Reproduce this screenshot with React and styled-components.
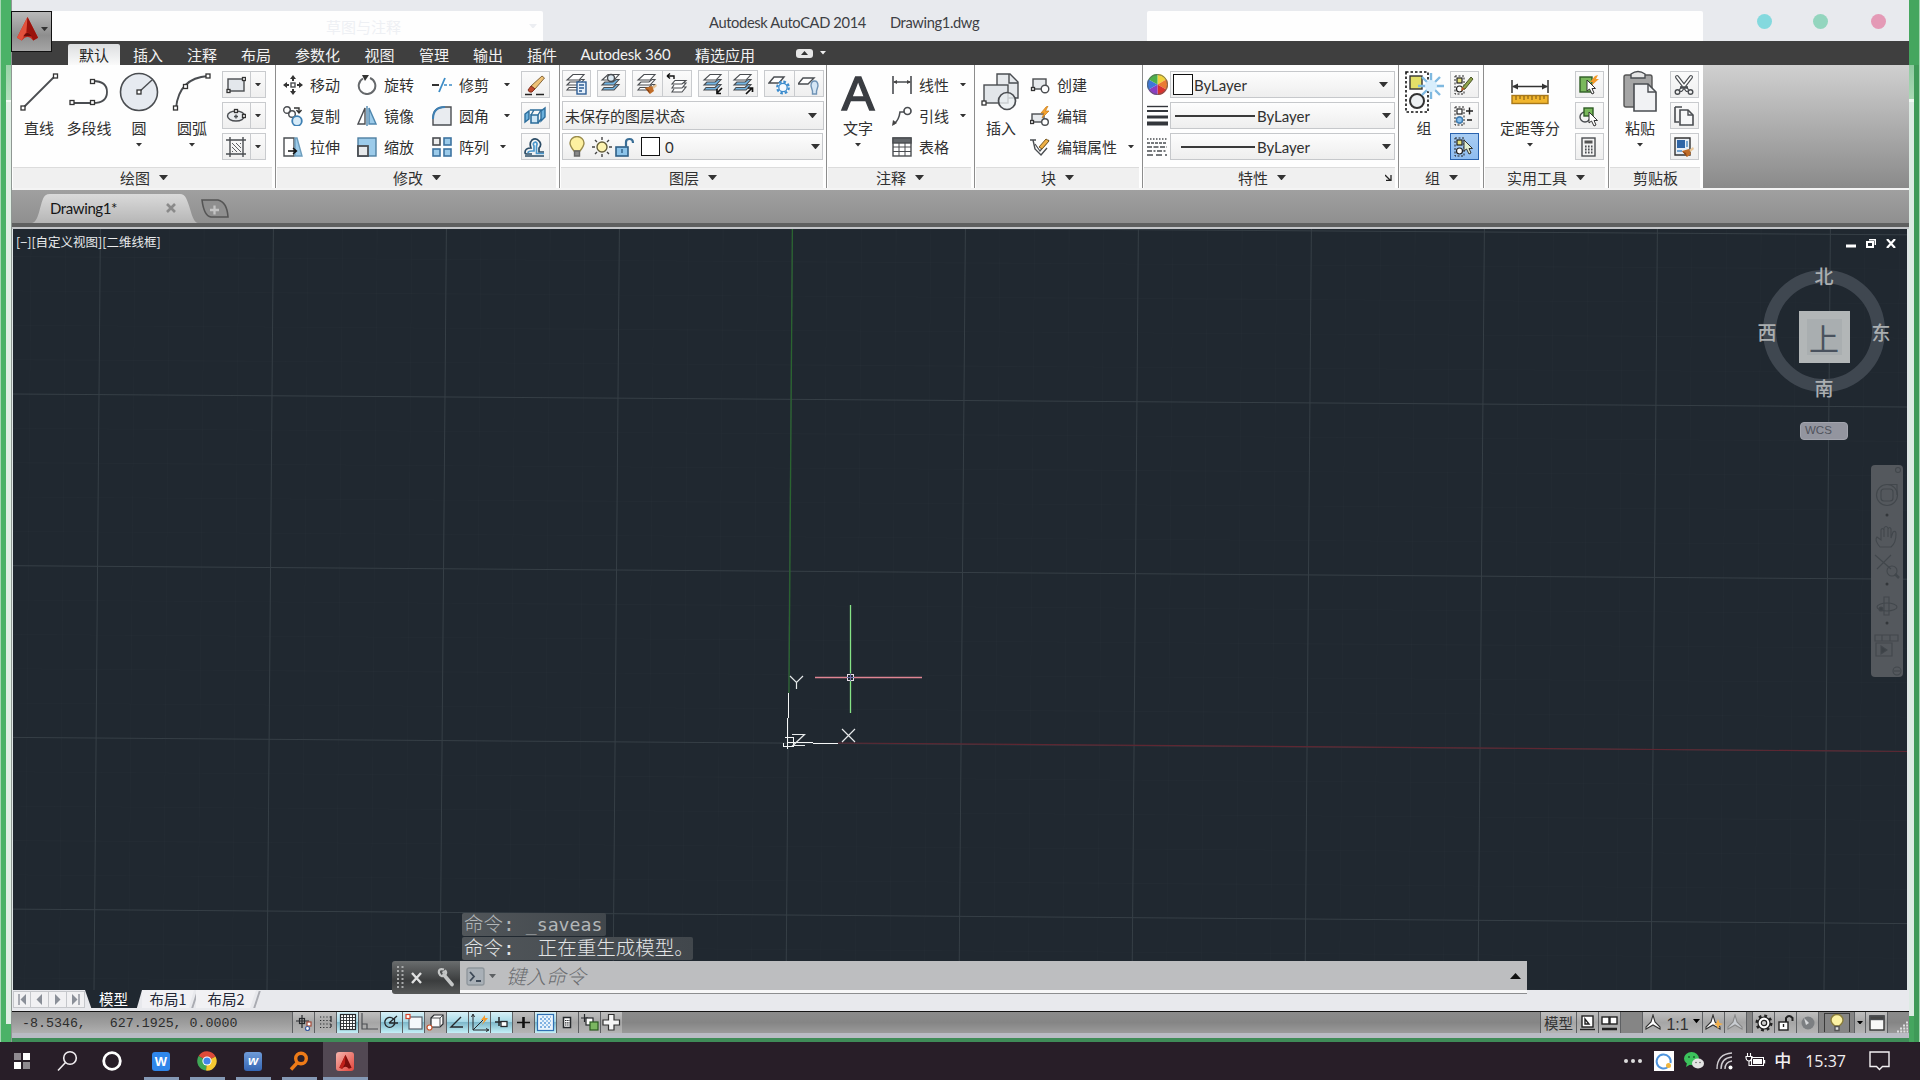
import React from "react";
import styled, { createGlobalStyle, css } from "styled-components";

const UI = `Lato, "Noto Sans CJK SC", sans-serif`;
const MONO = `"Liberation Mono", "Noto Sans CJK SC", monospace`;

const Global = createGlobalStyle`
  html, body { margin: 0; padding: 0; }
  body { width: 1920px; height: 1080px; overflow: hidden; background: #281e28; font-family: ${UI}; }
  *, *::before { box-sizing: border-box; }
  svg { display: block; flex: none; }
`;

/* ---------- frame ---------- */
const Screen = styled.div`
  width: 1920px;
  height: 1080px;
  display: flex;
  flex-direction: column;
  overflow: hidden;
`;
const Frame = styled.div`
  position: relative;
  height: 1042px;
  display: grid;
  grid-template-columns: 12px 1fr 11px;
  background: #e8eaee;
`;
const LeftEdge = styled.div`
  background:
    linear-gradient(#e0efe4, #e0efe4) 6px 102px / 5px 922px no-repeat,
    linear-gradient(#f4faf5, #f4faf5) 6px 100px / 5px 2px no-repeat,
    linear-gradient(#9ad3a8, #b4e0be) 6px 65px / 5px 35px no-repeat,
    linear-gradient(#a6d6b3, #a6d6b3) 0 0 / 1px 100% no-repeat,
    #4bb267;
  border-right: 1px solid #8f9793;
`;
const RightEdge = styled.div`
  background:
    linear-gradient(#3f9a58, #3f9a58) 5px 65px / 5px 977px no-repeat,
    linear-gradient(#dcebe3, #dcebe3) 0 102px / 5px 914px no-repeat,
    linear-gradient(#f0f8f2, #f0f8f2) 0 99px / 5px 3px no-repeat,
    linear-gradient(#8fcaa0, #a9d9b4) 0 65px / 5px 34px no-repeat,
    linear-gradient(#a6d6b3, #a6d6b3) 10px 0 / 1px 100% no-repeat,
    #45a65f;
`;
const Center = styled.div`
  display: flex;
  flex-direction: column;
  min-width: 0;
`;

/* ---------- title ---------- */
const TitleBar = styled.div`
  height: 41px;
  display: flex;
  align-items: flex-end;
  background: #e8eaee;
`;
const WhiteStrip = styled.div`
  width: ${(p) => p.$w}px;
  height: 30px;
  margin-left: ${(p) => p.$ml || 0}px;
  background: #fefefe;
  display: flex;
  align-items: center;
  padding-left: ${(p) => p.$pl || 0}px;
  padding-right: 6px;
  justify-content: space-between;
  color: #eef0f4;
  font-size: 15px;
  border-radius: 2px 2px 0 0;
`;
const Caption = styled.div`
  width: 604px;
  height: 41px;
  display: flex;
  align-items: center;
  padding: 2px 0 0 166px;
  gap: 24px;
  color: #3d4044;
  font-size: 14.7px;
  letter-spacing: -0.37px;
  white-space: nowrap;
`;
const Dots = styled.div`
  display: flex;
  height: 41px;
  align-items: center;
  padding: 2px 0 0 54px;
`;
const Dot = styled.i`
  width: 15px;
  height: 15px;
  border-radius: 50%;
  background: ${(p) => p.$c};
  margin-right: ${(p) => p.$mr}px;
`;
const AppButton = styled.div`
  position: absolute;
  left: 11px;
  top: 11px;
  width: 41px;
  height: 41px;
  border: 1px solid #111;
  background: linear-gradient(#b9b9b9, #8e8e8e 60%, #a5a5a5);
  display: flex;
  align-items: center;
  padding: 0 0 5px 4px;
  gap: 2px;
`;

/* ---------- ribbon ---------- */
const TabStrip = styled.div`
  height: 24px;
  background: #3f3f3f;
  display: flex;
  align-items: flex-end;
  padding-left: 56px;
`;
const Tab = styled.div`
  width: ${(p) => p.$w}px;
  height: 21px;
  display: flex;
  align-items: center;
  justify-content: center;
  padding-bottom: 1px;
  color: #f2f2f2;
  font-size: 15px;
  letter-spacing: ${(p) => p.$ls || 0}px;
  white-space: nowrap;
  margin-right: ${(p) => (p.$on ? 1 : 0)}px;
  ${(p) =>
    p.$on &&
    css`
      background: linear-gradient(#dcdee0, #fafafa);
      color: #222;
      border-radius: 2px 2px 0 0;
    `}
`;
const TabToggle = styled.div`
  height: 24px;
  display: flex;
  align-items: center;
  gap: 7px;
  margin-left: 28px;
`;
const Pill = styled.div`
  width: 17px;
  height: 9px;
  border-radius: 3px;
  background: #e6e6e6;
  display: flex;
  align-items: center;
  justify-content: center;
`;
const Ribbon = styled.div`
  height: 125px;
  display: flex;
  border-bottom: 2px solid #f4f4f4;
  background: linear-gradient(#d0d0d0, #8a8a8a);
`;
const PanelBox = styled.div`
  width: ${(p) => p.$w}px;
  height: 123px;
  display: flex;
  flex-direction: column;
  background: #fefefe;
  border-right: ${(p) => (p.$last ? 0 : 1)}px solid #8d8d8d;
  flex: none;
`;
const PanelBody = styled.div`
  height: 102px;
  display: flex;
  align-items: flex-start;
`;
const PanelTitle = styled.div`
  height: 21px;
  margin: 0 3px 0 1px;
  background: #f0f0f0;
  border-top: 1px solid #dcdcdc;
  display: flex;
  align-items: center;
  padding: 0 0 1px ${(p) => p.$pl}px;
  gap: 9px;
  font-size: 15px;
  color: #303030;
  white-space: nowrap;
`;
const PanelCorner = styled.div`
  margin: 0 3px 0 auto;
`;
const Big = styled.div`
  width: ${(p) => p.$w}px;
  margin-left: ${(p) => p.$ml || 0}px;
  display: flex;
  flex-direction: column;
  align-items: center;
  flex: none;
`;
const BigIcon = styled.div`
  height: 53px;
  display: flex;
  align-items: center;
  justify-content: center;
`;
const BigLabel = styled.div`
  height: 21px;
  line-height: 21px;
  font-size: 15px;
  color: #303030;
  white-space: nowrap;
  margin-bottom: 4px;
`;
const BigLetter = styled.span`
  font: 49px/1 "Liberation Sans", sans-serif;
  color: #3a3d42;
  -webkit-text-stroke: 1.4px #3a3d42;
  padding-top: 3px;
`;
const Stack = styled.div`
  display: flex;
  flex-direction: column;
  gap: 4px;
  padding-top: 6px;
  margin-left: ${(p) => p.$ml || 0}px;
`;
const Sq = styled.div`
  width: ${(p) => p.$w || 29}px;
  height: 27px;
  display: flex;
  align-items: center;
  justify-content: center;
  border: 1px solid ${(p) => (p.$on ? "#2a63ae" : "#c9cbce")};
  background: ${(p) => (p.$on ? "linear-gradient(#a9cdf3,#8fbdf0)" : "linear-gradient(#fbfbfb,#efefef)")};
  padding-right: ${(p) => (p.$w === 16 ? 0 : 1)}px;
  flex: none;
`;
const Split = styled.div`
  display: flex;
  & > * + * { margin-left: -1px; }
`;
const Rows = styled.div`
  width: ${(p) => p.$w}px;
  margin-left: ${(p) => p.$ml || 0}px;
  padding-top: 4px;
  flex: none;
`;
const Row = styled.div`
  height: 31px;
  display: flex;
  align-items: center;
  gap: 7px;
  font-size: 15px;
  color: #303030;
  white-space: nowrap;
`;
const Push = styled.div`
  margin-left: auto;
  padding-right: ${(p) => p.$pr || 0}px;
`;
const LayerCol = styled.div`
  padding: 5px 0 0 2px;
  display: flex;
  flex-direction: column;
`;
const LayerTools = styled.div`
  display: flex;
  gap: 6px;
  margin-bottom: 4px;
`;
const Combo = styled.div`
  width: ${(p) => p.$w}px;
  height: ${(p) => p.$h || 27}px;
  margin-bottom: ${(p) => p.$mb || 0}px;
  border: 1px solid #c6c8cb;
  background: linear-gradient(#fdfdfd, #eeeeee);
  display: flex;
  align-items: center;
  padding: 0 ${(p) => p.$pr || 4}px 0 ${(p) => p.$pl || 3}px;
  font-size: 15px;
  color: #303030;
  white-space: nowrap;
`;
const Swatch = styled.i`
  width: ${(p) => p.$s}px;
  height: ${(p) => p.$h || p.$s}px;
  border: 1.5px solid #111;
  background: #fff;
  margin: 0 ${(p) => p.$mr}px 0 ${(p) => p.$ml || 0}px;
`;
const LineSample = styled.i`
  width: ${(p) => p.$w}px;
  height: 2px;
  background: #3a3a3a;
  margin: 0 2px 0 ${(p) => p.$ml}px;
`;
const PropIcons = styled.div`
  width: 27px;
  padding: 0 0 0 4px;
  display: flex;
  align-items: center;
`;
const PropRow = styled.div`
  display: flex;
`;

/* ---------- document tabs ---------- */
const DocBar = styled.div`
  height: 33px;
  background: linear-gradient(#a0a0a0, #8f8f8f);
  display: flex;
  align-items: flex-end;
  padding-left: 20px;
`;
const DocTab = styled.div`
  width: 166px;
  height: 29px;
  clip-path: path("M0 29 C8 28 8 4 14 1 Q15 0 18 0 L148 0 Q152 0 154 4 C159 14 160 28 166 29 Z");
  background: linear-gradient(#dadada, #b6b6b6);
  display: flex;
  align-items: center;
  justify-content: space-between;
  padding: 0 22px 2px 18px;
  font-size: 15px;
  letter-spacing: -0.4px;
  color: #161616;
`;
const NewTab = styled.div`
  margin: 0 0 5px 3px;
`;
const Bevel = styled.div`
  height: 6px;
  background: #5f6060;
  border-bottom: 2px solid #c3c5c8;
`;

/* ---------- drawing area ---------- */
const Canvas = styled.div`
  position: relative;
  height: 761px;
  margin: 0 2px 0 1px;
  background: #202830;
  overflow: hidden;
`;
const CanvasWrap = styled.div`
  background: #dfe6e6;
`;
const Drawing = styled.svg`
  position: absolute;
  inset: 0;
`;
const ViewLabel = styled.div`
  position: absolute;
  left: 3px;
  top: 3px;
  font: 12.5px/19px "Noto Sans CJK SC", sans-serif;
  color: #e9ebec;
  white-space: nowrap;
`;
const WinCtl = styled.div`
  position: absolute;
  right: 11px;
  top: 10px;
  display: flex;
  gap: 10px;
`;
const Compass = styled.div`
  position: absolute;
  left: 1743px;
  top: 35px;
  width: 136px;
  height: 136px;
  display: grid;
  grid-template-columns: 22px 1fr 22px;
  grid-template-rows: 24px 1fr 24px;
  place-items: center;
  font: 500 19px/22px "Noto Sans CJK SC", sans-serif;
  color: #abafb1;
  &::before {
    content: "";
    position: absolute;
    left: 7px;
    top: 6px;
    width: 122px;
    height: 122px;
    border-radius: 50%;
    border: 13px solid #3f4750;
  }
  & > * { position: relative; }
`;
const Pt = styled.span`
  grid-area: ${(p) => p.$a};
`;
const Cube = styled.div`
  grid-area: 2 / 2;
  width: 51px;
  height: 52px;
  background: #a9aeb0;
  border: 8px solid #b2b6b7;
  display: flex;
  align-items: center;
  justify-content: center;
  color: #4a525e;
  font-size: 30px;
  font-weight: 400;
  margin-top: 10px;
`;
const Wcs = styled.div`
  position: absolute;
  left: 1787px;
  top: 193px;
  width: 48px;
  height: 18px;
  border-radius: 4px;
  background: #93959f;
  border: 1px solid #a2a4ad;
  color: #50535c;
  font: 11.5px/15px "Liberation Sans", sans-serif;
  padding-left: 4px;
`;
const NavBar = styled.div`
  position: absolute;
  left: 1858px;
  top: 236px;
  width: 32px;
  height: 212px;
  border-radius: 4px;
  background: #54585d;
`;

/* ---------- command line ---------- */
const CmdArea = styled.div`
  position: absolute;
  left: 392px;
  top: 913px;
  width: 1135px;
  display: flex;
  flex-direction: column;
`;
const History = styled.div`
  width: ${(p) => p.$w}px;
  height: 23px;
  margin: 0 0 1px 70px;
  background: linear-gradient(90deg, #51565a, #41474c);
  border-radius: 2px;
  color: ${(p) => p.$c};
  font: 300 19.5px/23px "DejaVu Sans Mono", "Noto Sans CJK SC", monospace;
  padding-left: 2px;
  display: flex;
  gap: ${(p) => p.$gap}px;
  white-space: pre;
`;
const HistoryText = styled.span`
  height: 23px;
`;
const SaveText = styled.span`
  font-size: 18.2px;
`;
const CmdBar = styled.div`
  height: 33px;
  display: flex;
`;
const CmdHandle = styled.div`
  width: 68px;
  background: linear-gradient(#6a6d6e, #3b3d3e 60%, #565858);
  border-radius: 3px 0 0 3px;
  display: flex;
  align-items: center;
  padding-left: 5px;
`;
const CmdInput = styled.div`
  flex: 1;
  background: #bdbec0;
  border-bottom: 1px solid #8d8e90;
  box-shadow: inset 0 -3px 0 #f7f7f8;
  display: flex;
  align-items: center;
  padding: 0 6px 2px 6px;
  font: italic 300 20px/28px "Noto Sans CJK SC", sans-serif;
  color: #6b6d70;
`;
const CmdText = styled.span`
  margin: 0 auto 0 10px;
`;

/* ---------- layout tabs and status ---------- */
const LayoutBar = styled.div`
  height: 21px;
  background: #e8e9ed;
  display: flex;
  padding: 1px 0 0 1px;
`;
const NavBtn = styled.div`
  width: 18px;
  height: 17px;
  border: 1px solid #c5c7cb;
  border-left-width: ${(p) => (p.$first ? 1 : 0)}px;
  background: #f1f1f3;
  display: flex;
  align-items: center;
  justify-content: center;
`;
const LayoutTab = styled.div`
  width: ${(p) => p.$w}px;
  height: 18px;
  margin: -1px 0 0 ${(p) => p.$ml || 0}px;
  font: 14.5px/18px "Noto Sans CJK SC", sans-serif;
  display: flex;
  justify-content: center;
  white-space: nowrap;
  color: ${(p) => (p.$on ? "#fff" : "#222736")};
  background: ${(p) => (p.$on ? "#202830" : "#f1f1f4")};
  clip-path: ${(p) =>
    p.$on ? "polygon(0 0, 100% 0, 91% 100%, 11% 100%)" : "polygon(0 0, 100% 0, 90% 100%, 0 100%)"};
`;
const Slash = styled.i`
  width: 2px;
  height: 17px;
  background: #a9abb2;
  transform: skewX(-18deg);
`;
const StatusWrap = styled.div`
  height: 31px;
  border-top: 1px solid #141414;
  display: flex;
  flex-direction: column;
  background: linear-gradient(#b9bbc4, #b9bbc4) 0 21px / 100% 5px no-repeat, #3f8c58;
`;
const Status = styled.div`
  height: 21px;
  display: flex;
  background: linear-gradient(#8b8b8b, #858585 50%, #9a9a9a);
`;
const Coords = styled.div`
  width: 280px;
  padding-left: 10px;
  background: linear-gradient(#8e8e8e, #9c9c9c 50%, #b0b0b0);
  font: 13.3px/23px ${MONO};
  color: #2c2c2c;
  white-space: pre;
`;
const SBtn = styled.div`
  width: ${(p) => p.$w || 22}px;
  height: 21px;
  display: flex;
  align-items: center;
  justify-content: center;
  gap: 3px;
  border-left: 1px solid #5e6063;
  background: ${(p) =>
    p.$on
      ? "linear-gradient(#d8f0f6,#a9dbe8 45%,#7fb9cb 50%,#c4f0f6)"
      : p.$dark
      ? "#858585"
      : "linear-gradient(#bfbfbf,#a6a6a6 50%,#b4b4b4)"};
  color: #333;
  font: 14.5px/24px "Noto Sans CJK SC", sans-serif;
  white-space: nowrap;
  flex: none;
`;
const Pressed = styled.div`
  width: 26px;
  height: 19px;
  border: 1px solid #3b3b3b;
  border-bottom: 0;
  display: flex;
  align-items: center;
  justify-content: center;
`;
const Scale = styled.span`
  font: 16px/20px "Liberation Sans", sans-serif;
  padding-top: 4px;
`;
const RaisedCaret = styled.span`
  padding-bottom: 2px;
  margin-left: 1px;
`;
const Spacer = styled.div`
  flex: 1;
`;
const Grip = styled.div`
  width: 22px;
  display: flex;
  align-items: flex-end;
  justify-content: flex-end;
  border-left: 1px solid #5e6063;
`;

/* ---------- taskbar ---------- */
const Taskbar = styled.div`
  height: 38px;
  background: #281e28;
  display: flex;
`;
const TaskItem = styled.div`
  width: ${(p) => p.$w}px;
  height: 38px;
  margin-right: ${(p) => p.$mr || 0}px;
  display: flex;
  align-items: center;
  justify-content: center;
  background: ${(p) => (p.$active ? "#524853" : "transparent")};
  border-bottom: ${(p) => (p.$open ? "3px solid #8599b5" : "0")};
  padding: ${(p) => (p.$open ? 3 : 0)}px 1px 0 0;
`;
const AppTile = styled.div`
  width: 18px;
  height: 19px;
  border-radius: 3px;
  background: ${(p) => p.$bg};
  color: #fff;
  font: ${(p) => p.$f || "bold 13px/19px"} "Liberation Sans", sans-serif;
  text-align: center;
`;
const Tray = styled.div`
  margin-left: auto;
  display: flex;
  align-items: center;
  color: #f1eef1;
  padding-right: 30px;
`;
const TrayText = styled.span`
  font: ${(p) => p.$f} "Open Sans", "Noto Sans CJK SC", sans-serif;
  margin-right: ${(p) => p.$mr}px;
`;
const Gap = styled.i`
  width: ${(p) => p.$w}px;
`;

/* ---------- icon helpers ---------- */
const G = ({ w = 20, h = 20, vb, children, ...r }) => (
  <svg width={w} height={h} viewBox={vb || `0 0 ${w} ${h}`} fill="none" stroke="#4a4d51" strokeWidth="1.4" {...r}>
    {children}
  </svg>
);
const Caret = ({ s = 7, c = "#333" }) => (
  <svg width={s} height={s * 0.6} viewBox="0 0 10 6"><path d="M0 0H10L5 6Z" fill={c} /></svg>
);
const Node = ({ x, y, s = 4 }) => (
  <rect x={x - s / 2} y={y - s / 2} width={s} height={s} fill="#fff" stroke="#333" strokeWidth="1.3" />
);
const blue = "#9ccbea";

const Layers = ({ fill = "#fff", children }) => (
  <G w={22} h={22}>
    <path d="M4 14.500L2 17H14L19 11.500H16L13 14.500Z" strokeWidth="1.100" fill={fill} />
    <path d="M5 9L2 12H14L19 6.500H16L13 9Z" strokeWidth="1.100" fill={fill} />
    <path d="M8 1.500H19L14 7H2Z" fill="#fff" strokeWidth="1.100" />
    {children}
  </G>
);

const Logo = ({ s = 24 }) => (
  <svg width={s} height={s * 1.1} viewBox="0 0 24 28" preserveAspectRatio="none">
    <path d="M12 1L1 24L6 27Q12 19 18 27L23 24Z" fill="#c7281c" />
    <path d="M12 1L1 24L6 27L11 17Z" fill="#e2513c" />
    <path d="M12 1L11 18Q15 18 18 27L23 24Z" fill="#9a130c" />
    <path d="M6 27Q8 19 12 18.500Q16 19 18 27L16.500 22.500H7.500Z" fill="#6f0c08" />
  </svg>
);

const Erase = () => (
  <G w={22} h={22}>
    <path d="M1 20.500H8M12 20.500H20" stroke="#222" />
    <path d="M18 2L20.500 4L11 15L7 12Z" fill="#efc277" stroke="#85663a" strokeWidth="1" />
    <path d="M7 12L11 15L8 18Q5 19 4 16Z" fill="#c24a2c" stroke="#843320" strokeWidth="1" />
  </G>
);

const GroupMini = ({ children, c = "#e6e27a" }) => (
  <G w={22} h={22}>
    <rect x="2" y="2" width="9" height="18" strokeDasharray="2 1.500" strokeWidth="1" stroke="#222" />
    <rect x="4" y="4" width="5" height="5" fill={c} stroke="#222" strokeWidth="1.2" />
    <circle cx="6.500" cy="15" r="3" fill="#fff" stroke="#222" strokeWidth="1.2" />
    {children}
  </G>
);
const Cursor = ({ x = 0, y = 0, f = "#fff" }) => (
  <path transform={`translate(${x} ${y})`} d="M0 0V11L2.500 9L5 14L7 13L5 8.500H8.500Z" fill={f} stroke="#333" strokeWidth="1" />
);
const Brush = ({ x = 0, y = 0 }) => (
  <g transform={`translate(${x} ${y})`} stroke="none">
    <path d="M7 3L11 0L12 2L8.500 5Z" fill="#e9c79a" />
    <path d="M0 4L7 2L9 7L5 10Z" fill="#c06c27" />
    <path d="M0 4L4 6L5 10Z" fill="#8c4414" />
  </g>
);

/* ---------- ribbon panels ---------- */
const Panel = ({ w, title, pl, last, noCaret, corner, children }) => (
  <PanelBox $w={w} $last={last}>
    <PanelBody>{children}</PanelBody>
    <PanelTitle $pl={pl}>
      {title}
      {!noCaret && <Caret s={9} />}
      {corner && (
        <PanelCorner>
          <G w={7} h={7}><path d="M0 1L5 6M6 1V6.500H1" strokeWidth="1.300" stroke="#222" /></G>
        </PanelCorner>
      )}
    </PanelTitle>
  </PanelBox>
);
const BigTool = ({ w, ml, icon, label, caret }) => (
  <Big $w={w} $ml={ml}>
    <BigIcon>{icon}</BigIcon>
    <BigLabel>{label}</BigLabel>
    {caret && <Caret s={6} />}
  </Big>
);

const DrawPanel = () => (
  <Panel w={264} title="绘图" pl={107}>
    <BigTool w={54} label="直线" icon={<G w={40} h={40}><path d="M4 36L36 4" strokeWidth="1.8" /><Node x={4} y={36} /><Node x={36.5} y={4} /></G>} />
    <BigTool w={46} label="多段线" icon={<G w={40} h={40}><path d="M3 31H23.500M24 9Q38 9 38 20Q38 31 24 31" strokeWidth="1.8" /><Node x={3} y={30.5} /><Node x={23.5} y={30.5} /><Node x={23.5} y={9.5} /></G>} />
    <BigTool w={54} label="圆" caret icon={<G w={40} h={40}><circle cx="20" cy="20" r="18.500" fill="#e6eaf0" strokeWidth="1.6" /><path d="M20 20L33 8" /><Node x={20} y={20} /></G>} />
    <BigTool w={52} label="圆弧" caret icon={<G w={40} h={40}><path d="M4 36Q7 6 36 4" strokeWidth="1.8" /><Node x={3.5} y={36} /><Node x={13.5} y={14.5} /><Node x={36} y={4} /></G>} />
    <Stack $ml={4}>
      <Split>
        <Sq><G><rect x="2" y="4" width="16" height="12" fill="#e3e7ec" /><Node x={2.5} y={16} s={3} /><Node x={18} y={4} s={3} /></G></Sq>
        <Sq $w={16}><Caret s={6} /></Sq>
      </Split>
      <Split>
        <Sq><G><ellipse cx="10" cy="10" rx="8.500" ry="5" fill="#e9ecef" /><Node x={10} y={5} s={3} /><Node x={18} y={10} s={3} /><path d="M8 10.500H12M10 8.500V12.500" /></G></Sq>
        <Sq $w={16}><Caret s={6} /></Sq>
      </Split>
      <Split>
        <Sq><G><path d="M4 0V20M17 0V20M0 3H20M0 17H20" /><path d="M6 6L15 15M6 10L11 15M10 6L15 11M14 6L15 7M6 14L7 15" strokeWidth="0.900" /></G></Sq>
        <Sq $w={16}><Caret s={6} /></Sq>
      </Split>
    </Stack>
  </Panel>
);

const ModifyPanel = () => (
  <Panel w={284} title="修改" pl={116}>
    <Rows $ml={7} $w={74}>
      <Row><G><path d="M10 0L7 4H13ZM10 20L7 16H13ZM0 10L4 7V13ZM20 10L16 7V13Z" fill="#333" stroke="none" /><path d="M10 3V6M10 14V17M3 10H6M14 10H17" stroke="#333" strokeWidth="2" /><rect x="8" y="8" width="4" height="4" /></G>移动</Row>
      <Row><G><circle cx="4" cy="4" r="3.300" /><circle cx="9" cy="8" r="3.300" /><path d="M11 2H16V6M13.500 4L16 7L18.500 4" stroke="#333" /><circle cx="14" cy="15" r="4.800" fill="#d7ebf8" stroke="#3e80b4" strokeWidth="1.800" /></G>复制</Row>
      <Row><G><path d="M1 1H11V19H1Z" fill="#fff" /><path d="M12 1H14L19 19H12Z" fill={blue} stroke="#6d9dbc" /><path d="M5 14H13M10 11L13.500 14L10 17" stroke="#111" /></G>拉伸</Row>
    </Rows>
    <Rows $w={75}>
      <Row><G><path d="M6 3.500A8.300 8.300 0 1 0 13 3" strokeWidth="2" stroke="#65686b" /><path d="M5 0H12L8 6Z" fill="#333" stroke="none" /></G>旋转</Row>
      <Row><G><path d="M8 2V18H1Z" fill="#fff" /><path d="M12 2V18H19Z" fill={blue} stroke="#4f87ae" /><path d="M10 0V20" stroke="#4f87ae" /></G>镜像</Row>
      <Row><G><rect x="1" y="1" width="18" height="18" fill={blue} stroke="#4f7fa2" /><rect x="1" y="9" width="10" height="10" fill="#e7e9eb" strokeWidth="1.800" /></G>缩放</Row>
    </Rows>
    <Rows $w={81}>
      <Row><G><path d="M0 10H7" strokeWidth="2" stroke="#333" /><path d="M7 17L13 3" stroke="#3c8cc6" strokeWidth="1.800" /><path d="M12 10H20" stroke="#3c8cc6" strokeDasharray="3 2" /></G>修剪<Push $pr={3}><Caret s={6} /></Push></Row>
      <Row><G><path d="M1 19V12Q1 1 13 1H19V19Z" fill="#e9ecf0" /><path d="M1 13Q1 1 13 1" stroke="#3e80b4" strokeWidth="2" /></G>圆角<Push $pr={3}><Caret s={6} /></Push></Row>
      <Row><G><rect x="1" y="1" width="7" height="7" fill="#eee" strokeWidth="1.600" /><rect x="12" y="1" width="7" height="7" fill={blue} stroke="#3e73a0" strokeWidth="1.600" /><rect x="1" y="12" width="7" height="7" fill={blue} stroke="#3e73a0" strokeWidth="1.600" /><rect x="12" y="12" width="7" height="7" fill={blue} stroke="#3e73a0" strokeWidth="1.600" /></G>阵列<Push $pr={7}><Caret s={6} /></Push></Row>
    </Rows>
    <Stack $ml={8}>
      <Sq><Erase /></Sq>
      <Sq><G w={22} h={22}><path d="M1 9L5 6V14L1 17Z" fill="#6bb0dc" stroke="#2c6d9b" /><path d="M17 6L21 3V12L17 16Z" fill="#6bb0dc" stroke="#2c6d9b" /><path d="M7 10H14V18H7Z" fill="#cfe7f6" stroke="#2c6d9b" strokeWidth="1.600" /><path d="M7 10L10 5H17L14 10M6 5H11M14 18L17 14" stroke="#2c6d9b" /></G></Sq>
      <Sq><G w={22} h={22}><path d="M1 20H20M20 16H15V12Q18 9 15.500 5.500Q12 1 8 4Q5 7 7 12Q1 12 1 16.500Q1 18 3 18H8" stroke="#2b4c66" strokeWidth="1.700" /><path d="M4 17Q4 15 8 15H10V10Q8 7 11.500 6Q14 7 12.500 10V17.500H20" stroke="#4a97cc" strokeWidth="1.700" /></G></Sq>
    </Stack>
  </Panel>
);

const LayerPanel = () => (
  <Panel w={267} title="图层" pl={108}>
    <LayerCol>
      <LayerTools>
        <Sq><Layers><rect x="12" y="9" width="9" height="12" fill="#e4effa" stroke="#2d5d94" /><path d="M14 12H19M14 15H19M14 18H17" stroke="#2d5d94" /></Layers></Sq>
        <Sq><Layers fill="#73b5e3"><circle cx="11" cy="5" r="3.500" fill="#dce9f2" /></Layers></Sq>
        <Split>
          <Sq $w={31}><Layers><Brush x={9} y={11} /></Layers></Sq>
          <Sq $w={30}><G w={22} h={22}><path d="M8 16L6 19H16L20 14H17.500M8 12L6 15H16L20 10H17.500M9 7.500H20L16 11H6Z" fill="#fff" strokeWidth="1.100" /><path d="M1 3H8V6M1 3L4 .5M1 3L4 5.500" stroke="#111" /></G></Sq>
        </Split>
        <Split>
          <Sq $w={31}><Layers fill="#73b5e3"><path d="M20 15L15 20M15 16V20.500H19" stroke="#111" strokeWidth="1.700" /></Layers></Sq>
          <Sq $w={30}><Layers fill="#73b5e3"><path d="M14 21L20 15M16 15H20.500V19" stroke="#111" strokeWidth="1.700" /></Layers></Sq>
        </Split>
        <Split>
          <Sq $w={31}><G w={22} h={22}><path d="M6 4H16L11 10H1Z" fill="#fff" /><circle cx="15" cy="14.500" r="5.800" stroke="#3c8ccd" strokeWidth="2.200" strokeDasharray="2.600 1.900" fill="#fff" /><circle cx="15" cy="14.500" r="4.200" stroke="#3c8ccd" strokeWidth="1.300" fill="#f4faff" /></G></Sq>
          <Sq $w={30}><G w={22} h={22}><path d="M5 5H16L10 11H0Z" fill="#fff" /><path d="M13 13Q13 8 16.500 8Q20 8 20 13L18.500 18V21H14.500V18Z" fill="#d5e6f5" stroke="#6f93b5" /></G></Sq>
        </Split>
      </LayerTools>
      <Combo $w={262} $h={29} $pl={2} $pr={6} $mb={3}>未保存的图层状态<Push><Caret s={9} /></Push></Combo>
      <Combo $w={261} $pl={6} $pr={2}>
        <G w={16} h={22}><path d="M5 15Q1 10 1 7A7 6.500 0 0 1 15 7Q15 10 11 15Z" fill="#fdf0a0" stroke="#9a8c4c" /><path d="M5.500 15H10.500V20H5.500Z" fill="#888" stroke="#666" /></G>
        <Gap $w={7} />
        <G><circle cx="10" cy="10" r="5" fill="#fdf3b0" stroke="#665f3a" /><path d="M10 0V3M10 17V20M0 10H3M17 10H20M3 3L5 5M15 15L17 17M17 3L15 5M3 17L5 15" stroke="#444" /></G>
        <Gap $w={3} />
        <G><rect x="1" y="10" width="12" height="9" fill="#8cc4ea" stroke="#2f5f86" strokeWidth="1.600" /><path d="M11 10V5Q11 2 14.500 2Q18 2 18 6" stroke="#3a6e96" strokeWidth="2.200" /><path d="M7 12V16" stroke="#2f5f86" /></G>
        <Swatch $s={19} $ml={6} $mr={5} />0
        <Push><Caret s={9} /></Push>
      </Combo>
    </LayerCol>
  </Panel>
);

const NotePanel = () => (
  <Panel w={148} title="注释" pl={48}>
    <BigTool w={46} ml={8} label="文字" caret icon={<BigLetter>A</BigLetter>} />
    <Rows $ml={11} $w={74}>
      <Row><G><path d="M1 1V19M19 1V19M2 7H18" strokeWidth="1.600" /><path d="M1 7L5 5V9ZM19 7L15 5V9Z" fill="#444" stroke="none" /></G>线性<Push><Caret s={6} /></Push></Row>
      <Row><G><circle cx="15.500" cy="5" r="3.500" strokeWidth="1.700" /><path d="M12 6H8Q7 14 2 18" strokeWidth="1.600" /><path d="M0 20L1 14L5 17Z" fill="#444" stroke="none" /></G>引线<Push><Caret s={6} /></Push></Row>
      <Row><G><rect x="1" y="1" width="18" height="18" fill="#fff" /><rect x="1" y="1" width="18" height="5" fill="#63676b" /><path d="M1 10H19M1 14.500H19M7 6V19M13 6V19" strokeWidth="1" /></G>表格</Row>
    </Rows>
  </Panel>
);

const BlockPanel = () => (
  <Panel w={168} title="块" pl={65}>
    <BigTool w={48} ml={2} label="插入" icon={<G w={40} h={40}><path d="M16 2H29L37 10V26H16Z" fill="#e6e9ec" /><path d="M28 2V11H37" /><rect x="3" y="13" width="24" height="18" fill="#e2e6ea" /><circle cx="26" cy="29" r="8.500" fill="#e9edf0" fillOpacity=".8" strokeWidth="1.700" /><Node x={3} y={31} /></G>} />
    <Rows $ml={5} $w={105}>
      <Row><G><rect x="3" y="4" width="13" height="10" fill="#e6e9ec" /><circle cx="15" cy="14" r="3.800" fill="#fff" /><Node x={3} y={14} s={3} /></G>创建</Row>
      <Row><G><rect x="2" y="8" width="12" height="8" fill="#e6e9ec" /><circle cx="15" cy="16" r="3.300" fill="#fff" /><path d="M16 1L11 7H14L12 12L19 5H15.500L18 0Z" fill="#f5a32f" stroke="#c77814" strokeWidth=".7" /><Node x={2} y={16} s={3} /></G>编辑</Row>
      <Row><G><path d="M0 3H6M3 3L5 12L11 18L17 11" /><path d="M5 7L10 14L19 3" strokeWidth="1.200" /><path d="M9 10L16 2L19 4L12 12Z" fill="#efb045" stroke="#7a5a22" strokeWidth="1" /></G>编辑属性<Push $pr={1}><Caret s={6} /></Push></Row>
    </Rows>
  </Panel>
);

const Rainbow = () => (
  <svg width="21" height="21" viewBox="0 0 20 20">
    <path d="M10 10L10 0A10 10 0 0 1 18.700 5Z" fill="#f0d23c" />
    <path d="M10 10L18.700 5A10 10 0 0 1 18.700 15Z" fill="#ea7a32" />
    <path d="M10 10L18.700 15A10 10 0 0 1 10 20Z" fill="#d8322e" />
    <path d="M10 10L10 20A10 10 0 0 1 1.300 15Z" fill="#8a3fc0" />
    <path d="M10 10L1.300 15A10 10 0 0 1 1.300 5Z" fill="#3f78d8" />
    <path d="M10 10L1.300 5A10 10 0 0 1 10 0Z" fill="#4db04a" />
    <circle cx="10" cy="10" r="9.500" fill="none" stroke="#5a5f5a" strokeWidth=".8" />
  </svg>
);

const PropsPanel = () => (
  <Panel w={256} title="特性" pl={94} corner>
    <Stack $ml={0}>
      <PropRow><PropIcons><Rainbow /></PropIcons><Combo $w={225} $pl={2} $pr={6}><Swatch $s={20} $h={21} $mr={1} />ByLayer<Push><Caret s={9} /></Push></Combo></PropRow>
      <PropRow><PropIcons><G w={21} h={21} stroke="#33363b"><path d="M0 1.500H21" /><path d="M0 6H21" strokeWidth="2" /><path d="M0 12H21" strokeWidth="3" /><path d="M0 18.500H21" strokeWidth="4" /></G></PropIcons><Combo $w={225} $pl={1} $pr={3}><LineSample $w={80} $ml={3} />ByLayer<Push><Caret s={9} /></Push></Combo></PropRow>
      <PropRow><PropIcons><G w={20} h={20}><path d="M0 2H20" strokeDasharray="1.500 1.500" /><path d="M0 6H20" strokeDasharray="3 1" /><path d="M0 10H20" strokeDasharray="5 1.500" /><path d="M0 14H20" strokeDasharray="5 1.500 2 1.500" /><path d="M0 18H20" strokeDasharray="6 3" /></G></PropIcons><Combo $w={225} $pl={1} $pr={3}><LineSample $w={74} $ml={9} />ByLayer<Push><Caret s={9} /></Push></Combo></PropRow>
    </Stack>
  </Panel>
);

const GroupPanel = () => (
  <Panel w={85} title="组" pl={25}>
    <BigTool w={40} ml={5} label="组" icon={
      <G w={42} h={46}><rect x="3" y="3" width="22" height="40" strokeDasharray="2.500 2" stroke="#111" strokeWidth="1.600" /><rect x="7" y="7" width="12" height="13" fill="#e3df68" stroke="#333" /><circle cx="14" cy="32" r="7" fill="#eef1f3" strokeWidth="2" stroke="#333" /><path d="M28 4V30M15 17H41M19 8L37 26M37 8L19 26" stroke="#7fb9e0" strokeWidth="2.400" /><circle cx="28" cy="17" r="6" fill="#d8eefc" stroke="none" /></G>
    } />
    <Stack $ml={6}>
      <Sq><GroupMini><path d="M9 14L18 3L20 5L12 15Z" fill="#8ea24b" stroke="#4c5726" strokeWidth="1" /><path d="M8 17L9 13L12 15Z" fill="#b55b22" stroke="none" /></GroupMini></Sq>
      <Sq><GroupMini c="#fff"><circle cx="6.500" cy="15" r="3" fill="#8dc2ef" stroke="#3f7fb6" /><path d="M13 6H20M16.500 2.500V9.500M14 15H19" stroke="#222" /></GroupMini></Sq>
      <Sq $on><GroupMini><Cursor x={11} y={4} f="#e3efd0" /></GroupMini></Sq>
    </Stack>
  </Panel>
);

const UtilPanel = () => (
  <Panel w={125} title="实用工具" pl={22}>
    <BigTool w={70} ml={11} label="定距等分" caret icon={
      <G w={40} h={27}><path d="M2 2V15M38 2V15M3 8.500H37" strokeWidth="1.500" stroke="#333" /><path d="M2 8.500L8 5.500V11.500ZM38 8.500L32 5.500V11.500Z" fill="#333" stroke="none" /><rect x="2" y="17.500" width="36" height="8" fill="#f1b62e" stroke="#a8781a" /><path d="M6 18V22M10 18V21M14 18V22M18 18V21M22 18V22M26 18V21M30 18V22M34 18V21" stroke="#7a5510" strokeWidth="1" /></G>
    } />
    <Stack $ml={10}>
      <Sq><G w={22} h={22}><rect x="2" y="3" width="12" height="15" fill="#7ab85c" stroke="#2e5c24" /><path d="M17 2L12 8H15L13 12L21 5H18L20 1Z" fill="#f39a2a" stroke="none" /><Cursor x={9} y={6} /></G></Sq>
      <Sq><G w={22} h={22}><circle cx="7" cy="12" r="5" /><rect x="6" y="3" width="9" height="8" fill="#7ab85c" stroke="#2e5c24" /><Cursor x={11} y={7} /></G></Sq>
      <Sq><G w={22} h={22}><rect x="4" y="2" width="13" height="18" fill="#f3f3f3" /><rect x="6.500" y="4.500" width="8" height="3" fill="#555" stroke="none" /><path d="M7 10.500H14.500M7 13.500H14.500M7 16.500H14.500" strokeDasharray="1.600 1.400" strokeWidth="1.800" /></G></Sq>
    </Stack>
  </Panel>
);

const ClipPanel = () => (
  <Panel w={94} title="剪贴板" pl={23} last noCaret>
    <BigTool w={50} ml={6} label="粘贴" caret icon={
      <G w={36} h={44}><rect x="2" y="5" width="28" height="32" rx="2" fill="#a5a5a5" stroke="#555" /><path d="M9 8V4Q16 -1 23 4V8Z" fill="#e6e6e6" /><path d="M12 14H26L34 22V41H12Z" fill="#f1f2f4" strokeWidth="1.600" /><path d="M26 14V22H34" /></G>
    } />
    <Stack $ml={5}>
      <Sq><G w={22} h={22}><path d="M4 3L14 16M18 3L8 16" strokeWidth="4" strokeLinecap="round" /><path d="M4 3L14 16M18 3L8 16" strokeWidth="1.700" strokeLinecap="round" stroke="#fff" /><circle cx="4.500" cy="18" r="2.300" /><circle cx="17.500" cy="18" r="2.300" /><path d="M7 13.500H15" strokeWidth="2.500" /></G></Sq>
      <Sq><G w={22} h={22}><path d="M2 2H9M2 2V17H6" strokeWidth="1.600" /><path d="M7 5H15L20 10V20H7Z" fill="#f6f7f8" strokeWidth="1.600" /><path d="M15 5V10H20" /></G></Sq>
      <Sq><G w={22} h={22}><path d="M2 2H17V19H2Z" fill="#e8eef5" stroke="#333" /><rect x="4" y="4" width="8" height="8" fill="#2f65a6" stroke="none" /><path d="M14 5V11M4 15H9" stroke="#4e8cc4" /><Brush x={9} y={11} /></G></Sq>
    </Stack>
  </Panel>
);

/* ---------- canvas drawing ---------- */
const majorX = Array.from({ length: 11 }, (_, k) => k);
const minorX = Array.from({ length: 56 }, (_, k) => k - 2).filter((k) => k % 5 !== 0);
const majorY = [-1, 0, 1, 2, 3];
const minorY = Array.from({ length: 24 }, (_, k) => k - 5).filter((k) => k % 5 !== 0);

const GridArt = () => (
  <Drawing width="1894" height="761" viewBox="13 229 1894 761" fill="none">
    <g stroke="#ffffff" strokeOpacity=".014">
      {minorX.map((k) => <path key={k} d={`M${100.4 + 34.6 * k} 229L${94 + 34.6 * k} 990`} />)}
      {minorY.map((k) => <path key={k} d={`M13 ${394 + 34.35 * k}L1907 ${407 + 34.45 * k}`} />)}
    </g>
    <g stroke="#363f46">
      {majorX.map((k) => <path key={k} d={`M${100.4 + 173 * k} 229L${94 + 173 * k} 990`} />)}
      {majorY.map((k) => <path key={k} d={`M13 ${394 + 171.7 * k}L1907 ${407 + 172.2 * k}`} />)}
    </g>
    <path d="M792.4 229L789 693" stroke="#2a6430" strokeWidth="1.300" />
    <path d="M838 743L1907 751.500" stroke="#5e2732" strokeWidth="1.200" />
    <g stroke="#f4f6f6" shapeRendering="crispEdges">
      <path d="M788.500 693V718M787.500 718V749" />
      <path d="M788 742.500H813M813 743.500H838" />
      <path d="M784.500 737.500H793.500V746.500H783.500V742.500" />
    </g>
    <g stroke="#e6e9ea" strokeWidth="1.200">
      <path d="M790 676L796.500 682.500L803 676M796.500 682.500V689" />
      <path d="M842 729L855 742M855 729L842 742" />
      <path d="M792 734.500H804.500L793 745.500H805" />
    </g>
    <path d="M850.500 605V673.500M850.500 681V713" stroke="#86e386" strokeWidth="1.300" />
    <path d="M815 677.500H847M854 677.500H922" stroke="#e08593" strokeWidth="1.300" />
    <rect x="847.500" y="674.500" width="6" height="6" stroke="#e9dfe9" />
    <path d="M847 677.500H854M850.500 674V681" stroke="#6d6da8" strokeWidth="1" />
  </Drawing>
);

const NavArt = () => (
  <svg width="32" height="212" viewBox="0 0 32 212" fill="none" stroke="#42474c" strokeWidth="1.100">
    <circle cx="27" cy="5" r="2.500" />
    <circle cx="16" cy="30" r="10.500" /><rect x="10" y="24" width="12" height="12" rx="3" /><path d="M16 19.500H26V30" />
    <path d="M9 82Q3 75 6 72L10 75V65Q11 62 13 65V72V63Q15 60 17 63V72V64Q19 61 20 64V73L22 67Q25 65 25 69Q25 78 20 82Z" />
    <path d="M4 90L20 104M20 90L6 104" /><circle cx="21" cy="106" r="5" /><path d="M24 109L28 113" strokeWidth="2.500" />
    <ellipse cx="16" cy="142" rx="10" ry="4" /><path d="M13 132H18V150H13Z" /><circle cx="10" cy="144" r="2" fill="#3d4247" />
    <path d="M4 170H27V176H4ZM11 170V176M19 170V176M5 178H21V191H5Z" /><path d="M10 181L16 185L10 189Z" fill="#3d4247" />
    <circle cx="26" cy="206" r="4" /><path d="M23 206H29" />
    <g fill="#33373b" stroke="none"><circle cx="16" cy="50" r="1.500" /><circle cx="16" cy="119" r="1.500" /><circle cx="16" cy="158" r="1.500" /></g>
  </svg>
);

/* ---------- status icons ---------- */
const S = (p) => <G w={20} h={19} stroke="#26292c" strokeWidth="1.200" {...p} />;
const statusIcons = [
  [0, <S key="0"><path d="M2 8H15M8 2V15" /><rect x="5.500" y="5.500" width="5" height="5" /><rect x="13" y="9" width="4" height="4" stroke="#a34b3a" fill="#fff" /><circle cx="13.500" cy="15.500" r="2" stroke="#3e5ea0" fill="#fff" /></S>],
  [0, <S key="1"><path d="M4 4H15M4 7.500H15M4 11H15M4 14.500H15" strokeDasharray="1.200 2" /><path d="M15 3V14" strokeDasharray="6 2" /></S>],
  [1, <S key="2"><rect x="2.500" y="1.500" width="15" height="15" fill="#fff" /><path d="M5.500 1V17M8.500 1V17M11.500 1V17M14.500 1V17M2 4.500H18M2 7.500H18M2 10.500H18M2 13.500H18" strokeWidth=".9" /></S>],
  [0, <S key="3"><path d="M2 0V16H18M2 11H7V16" stroke="#4c4f53" /></S>],
  [1, <S key="4"><path d="M11.500 6A5 5 0 1 0 12.500 11" strokeWidth="1.300" /><path d="M7 10L15 3M7 10H16M12.500 5.500V12" strokeWidth="1.300" /></S>],
  [1, <S key="5"><rect x="5" y="4" width="13" height="12" fill="#f4f8fb" stroke="#55606a" /><rect x="2" y="1.500" width="4" height="4" stroke="#d4452c" fill="#fff" /></S>],
  [0, <S key="6"><path d="M5 5L8 2H17V11L14 14H5Z" fill="#fbfbfb" /><path d="M14 5V13M5 5H14L17 2" strokeWidth=".8" /><circle cx="3.500" cy="14.500" r="2.500" stroke="#c8532c" fill="#fff" /></S>],
  [1, <S key="7"><path d="M13 4L3 14H15" strokeWidth="1.400" /></S>],
  [1, <S key="8"><path d="M3 2V17H18M3 17L14 6M1.500 4L3 1L4.500 4M16 15.500L19 17L16 18.500" strokeWidth="1" /><path d="M15 2L11 7H14L12 12L18 5H15Z" fill="#f59b2c" stroke="none" /></S>],
  [1, <S key="9"><path d="M3 9H11M7 4V13" strokeWidth="1.500" /><rect x="9" y="8.500" width="6" height="5" fill="#fff" strokeWidth="1.300" /></S>],
  [0, <S key="10"><path d="M3 9.500H16" strokeWidth="1.500" stroke="#111" /><path d="M9.500 4V15" strokeWidth="2.600" stroke="#111" /></S>],
  [1, <S key="11"><rect x="1.500" y="1.500" width="16" height="16" fill="#e9f4fc" stroke="#2f70b4" /><path d="M4 6H15M4 10H15M4 14H15" stroke="#7fb0e0" strokeDasharray="2 2" strokeWidth="2" /><path d="M6 4H15M6 8H15M6 12H15" stroke="#9cc5ea" strokeDasharray="2 2" strokeWidth="2" /></S>],
  [0, <S key="12"><rect x="5.500" y="4.500" width="7" height="10" fill="#fff" strokeWidth="1.500" /><path d="M7 7.500H11.500M7 9.800H11.500M7 12H11.500" strokeDasharray="1.200 .5" /></S>],
  [0, <S key="13"><path d="M1 5H8M4.500 1V9" /><rect x="6" y="5" width="7" height="7" fill="#fff" /><rect x="10" y="9" width="8" height="8" fill="#7bb661" stroke="#2c5a22" /></S>],
  [0, <S key="14"><path d="M6.500 1.500H12V7H17.500V12H12V17H6.500V12H1V7H6.500Z" fill="#f6f6f6" stroke="#333" /></S>],
];

const Annot = ({ star, c = "#fff", k = "#333" }) => (
  <G w={18} h={18} stroke={k} strokeWidth="1.100">
    <path d="M8 1L10 8L15 13V15L8 11L1 15V13L6 8Z" fill={c} />
    {star && <path d="M13 5L14.500 9L18 10L14.500 11.500L13 15L11.500 11.500L9 10L11.500 9Z" fill="#f3b04a" stroke="none" />}
  </G>
);

export default function App() {
  return (
    <Screen>
      <Global />
      <Frame>
        <LeftEdge />
        <Center>
          <TitleBar>
            <WhiteStrip $w={491} $ml={40} $pl={274}>草图与注释<Caret s={8} c="#eceef2" /></WhiteStrip>
            <Caption><span>Autodesk AutoCAD 2014</span><span>Drawing1.dwg</span></Caption>
            <WhiteStrip $w={556} />
            <Dots><Dot $c="#84d9de" $mr={41} /><Dot $c="#93d5be" $mr={43} /><Dot $c="#e49ab6" $mr={0} /></Dots>
          </TitleBar>
          <TabStrip>
            <Tab $w={52} $on>默认</Tab>
            <Tab $w={54}>插入</Tab>
            <Tab $w={54}>注释</Tab>
            <Tab $w={54}>布局</Tab>
            <Tab $w={69}>参数化</Tab>
            <Tab $w={55}>视图</Tab>
            <Tab $w={54}>管理</Tab>
            <Tab $w={54}>输出</Tab>
            <Tab $w={54}>插件</Tab>
            <Tab $w={113} $ls={-0.2}>Autodesk 360</Tab>
            <Tab $w={86}>精选应用</Tab>
            <TabToggle>
              <Pill><svg width="7" height="4" viewBox="0 0 7 4"><path d="M3.500 0L7 4H0Z" fill="#333" /></svg></Pill>
              <Caret s={6} c="#eee" />
            </TabToggle>
          </TabStrip>
          <Ribbon>
            <DrawPanel />
            <ModifyPanel />
            <LayerPanel />
            <NotePanel />
            <BlockPanel />
            <PropsPanel />
            <GroupPanel />
            <UtilPanel />
            <ClipPanel />
          </Ribbon>
          <DocBar>
            <DocTab>Drawing1*<G w={10} h={10}><path d="M1 1L9 9M9 1L1 9" stroke="#8a8a8a" strokeWidth="2.600" /></G></DocTab>
            <NewTab><G w={28} h={19} stroke="#555" strokeWidth="1.600"><path d="M1 1H17Q26 3 27 18H10Q3 17 1 1Z" fill="#8f8f8f" /><path d="M9 11H18M13.500 6.500V15.500" stroke="#c4c4c4" strokeWidth="2.300" /></G></NewTab>
          </DocBar>
          <Bevel />
          <CanvasWrap>
            <Canvas>
              <GridArt />
              <ViewLabel>[−][自定义视图][二维线框]</ViewLabel>
              <WinCtl>
                <G w={10} h={9} stroke="#fff"><path d="M0 7H10" strokeWidth="3" /></G>
                <G w={10} h={9} stroke="#fff"><rect x="1" y="3" width="6" height="5" strokeWidth="2" /><path d="M3 .7H9.300V6" /></G>
                <G w={10} h={9} stroke="#fff"><path d="M1 0L9 9M9 0L1 9" strokeWidth="2.200" /></G>
              </WinCtl>
              <Compass>
                <Pt $a="1 / 2">北</Pt>
                <Pt $a="2 / 1">西</Pt>
                <Cube>上</Cube>
                <Pt $a="2 / 3">东</Pt>
                <Pt $a="3 / 2">南</Pt>
              </Compass>
              <Wcs>WCS</Wcs>
              <NavBar><NavArt /></NavBar>
            </Canvas>
          </CanvasWrap>
          <LayoutBar>
            <NavBtn $first><G w={9} h={11} stroke="#8a8f98"><path d="M1 0V11" /><path d="M8 0V11L2.500 5.500Z" fill="#8a8f98" stroke="none" /></G></NavBtn>
            <NavBtn><G w={9} h={11}><path d="M7 0V11L1.500 5.500Z" fill="#8a8f98" stroke="none" /></G></NavBtn>
            <NavBtn><G w={9} h={11}><path d="M2 0V11L7.500 5.500Z" fill="#8a8f98" stroke="none" /></G></NavBtn>
            <NavBtn><G w={9} h={11} stroke="#8a8f98"><path d="M8 0V11" /><path d="M1 0V11L6.500 5.500Z" fill="#8a8f98" stroke="none" /></G></NavBtn>
            <LayoutTab $w={57} $on>模型</LayoutTab>
            <LayoutTab $w={52}>布局1</LayoutTab><Slash />
            <LayoutTab $w={60}>布局2</LayoutTab><Slash />
          </LayoutBar>
          <StatusWrap>
            <Status>
              <Coords>{"-8.5346,   627.1925, 0.0000"}</Coords>
              {statusIcons.map(([on, icon], i) => <SBtn key={i} $on={on}>{icon}</SBtn>)}
              <Spacer />
              <SBtn $w={36}>模型</SBtn>
              <SBtn><G w={17} h={16} stroke="#222"><path d="M1 14.500H16" /><rect x="3" y="1" width="11" height="11" fill="#fff" /><path d="M6 4V9H10Z" /></G></SBtn>
              <SBtn><G w={17} h={16} stroke="#222"><path d="M1 14H16" strokeWidth="2.500" /><rect x="1" y="2" width="7" height="7" fill="#fff" /><rect x="9" y="2" width="7" height="7" fill="#fff" /></G></SBtn>
              <SBtn $dark />
              <SBtn $w={60}><Annot /><Scale>1:1</Scale><RaisedCaret><Caret s={7} c="#000" /></RaisedCaret></SBtn>
              <SBtn><Annot star /></SBtn>
              <SBtn><Annot c="#c9cdd2" k="#888" /></SBtn>
              <SBtn $w={6} $dark />
              <SBtn><G w={18} h={18} stroke="#222"><circle cx="9" cy="9" r="7" stroke="#222" strokeDasharray="2.700 2.800" strokeWidth="3" /><circle cx="9" cy="9" r="6" fill="#fff" strokeWidth="1.200" /><circle cx="9" cy="9" r="2.700" fill="#ccc" strokeWidth="1.200" /></G></SBtn>
              <SBtn><G w={18} h={18} stroke="#222"><rect x="2" y="8" width="9" height="8" fill="#fff" /><path d="M9 8V4Q12 0 15.500 4V7" strokeWidth="2" /><path d="M6.500 10V13" /></G></SBtn>
              <SBtn><G w={16} h={16} stroke="none"><circle cx="8" cy="8" r="6.500" fill="#7c7f82" /><path d="M4 3L9 8L6 10Z" fill="#d5d7d9" /></G></SBtn>
              <SBtn $w={36} $dark><Pressed><G w={14} h={18}><path d="M5 12Q1 9 1 6A6 5.500 0 0 1 13 6Q13 9 9 12Z" fill="#fdf3a4" stroke="#8a7d3c" /><path d="M5 12.500H9V16.500H5Z" fill="#ddd" stroke="#555" /></G></Pressed></SBtn>
              <SBtn $w={11}><Caret s={6} c="#000" /></SBtn>
              <SBtn><G w={16} h={16}><rect x="1" y="1" width="14" height="14" fill="#f7f7f7" stroke="#333" /><rect x="1" y="1" width="14" height="3.500" fill="#444" /></G></SBtn>
              <Grip><G w={12} h={12} stroke="#dfe0e2" strokeWidth="2"><path d="M9 1.500H11M6 4.500H11M3 7.500H11M0 10.500H11" strokeDasharray="2 1.200" /></G></Grip>
            </Status>
          </StatusWrap>
        </Center>
        <RightEdge />
        <AppButton><Logo s={23} /><Caret s={7} /></AppButton>
        <CmdArea>
          <History $w={144} $c="#b3b7b9" $gap={11}><HistoryText>命令:</HistoryText><SaveText>_saveas</SaveText></History>
          <History $w={231} $c="#e3e5e6" $gap={23}><HistoryText>命令:</HistoryText><HistoryText>正在重生成模型。</HistoryText></History>
          <CmdBar>
            <CmdHandle>
              <G w={7} h={24} stroke="#a9abac" strokeWidth="2"><path d="M1 0V24M5.500 0V24" strokeDasharray="2 2" /></G>
              <Gap $w={7} />
              <G w={11} h={12} stroke="#dfe0e0" strokeWidth="2.400"><path d="M1 1L10 11M10 1L1 11" /></G>
              <Gap $w={15} />
              <G w={18} h={19} stroke="#c4c6c6"><path d="M7 7L15 16.500" strokeWidth="3.600" strokeLinecap="round" /><path d="M7 1.500Q1 0 2 5Q4 10 8 7Q10 5 8.500 3L5.500 5" strokeWidth="2.200" /></G>
            </CmdHandle>
            <CmdInput>
              <G w={19} h={19}><rect x="1" y="1" width="17" height="17" rx="2" fill="#a9b0b7" stroke="#8f969c" /><path d="M4 5L8 9.500L4 14M10 14H15" stroke="#3e4a58" strokeWidth="1.800" /></G>
              <Gap $w={4} />
              <Caret s={7} c="#5d6063" />
              <CmdText>键入命令</CmdText>
              <svg width="11" height="6" viewBox="0 0 11 6"><path d="M5.500 0L11 6H0Z" fill="#111" /></svg>
            </CmdInput>
          </CmdBar>
        </CmdArea>
      </Frame>
      <Taskbar>
        <TaskItem $w={44}><G w={16} h={16} stroke="none"><path d="M0 0H7V7H0ZM9 9H16V16H9Z" fill="#8f8a90" /><path d="M9 0H16V7H9ZM0 9H7V16H0Z" fill="#fff" /></G></TaskItem>
        <TaskItem $w={46}><G w={22} h={22} stroke="#f1eef1" strokeWidth="1.600"><circle cx="14" cy="8" r="6.300" /><path d="M9.500 12.500L2 20.500" /></G></TaskItem>
        <TaskItem $w={44} $mr={10}><G w={20} h={20} stroke="#fff" strokeWidth="2.800"><circle cx="10" cy="10" r="8.300" /></G></TaskItem>
        <TaskItem $w={35} $mr={11} $open><AppTile $bg="#2f86ea">W</AppTile></TaskItem>
        <TaskItem $w={35} $mr={11} $open>
          <svg width="20" height="20" viewBox="0 0 20 20"><path d="M10 10L1.600 5A9.600 9.600 0 0 1 18.500 5.500Z" fill="#dd4b3a" /><path d="M10 10L1.600 5A9.600 9.600 0 0 0 9 19.600Z" fill="#3fa756" /><path d="M10 10L18.500 5.500A9.600 9.600 0 0 1 9 19.600Z" fill="#f6c932" /><circle cx="10" cy="10" r="4.600" fill="#fff" /><circle cx="10" cy="10" r="3.600" fill="#4384ea" /></svg>
        </TaskItem>
        <TaskItem $w={35} $mr={11} $open><AppTile $bg="linear-gradient(#6f9bd8,#3566b4)" $f="italic bold 13px/17px">w</AppTile></TaskItem>
        <TaskItem $w={35} $mr={6} $open><G w={20} h={20} stroke="#ee7b18" strokeWidth="3.400"><circle cx="12" cy="7.500" r="5.300" /><path d="M8 12L2 18.500" /></G></TaskItem>
        <TaskItem $w={45} $open $active>
          <AppTile $bg="linear-gradient(135deg,#f7b5ad,#e2453c)"><svg width="19" height="19" viewBox="-5 -4 34 34"><path d="M12 1L1 24L6 26Q12 19 18 26L23 24Z" fill="#7c0d0b" /><path d="M12 1L1 24L6 26L11 17Z" fill="#c01f18" /></svg></AppTile>
        </TaskItem>
        <Tray>
          <G w={20} h={6} stroke="none"><circle cx="3" cy="3" r="2" fill="#ddd" /><circle cx="10" cy="3" r="2" fill="#ddd" /><circle cx="17" cy="3" r="2" fill="#ddd" /></G>
          <Gap $w={11} />
          <G w={20} h={20}><rect width="20" height="20" fill="#fff" stroke="none" /><path d="M14 16A7 7 0 1 1 16.500 12" stroke="#4f94dd" strokeWidth="2" /><circle cx="14.500" cy="14.500" r="2.500" fill="#f0b53d" stroke="none" /></G>
          <Gap $w={10} />
          <G w={20} h={18} stroke="none"><ellipse cx="7.500" cy="6.500" rx="7.500" ry="6.500" fill="#3cc25c" /><path d="M3 11L2 15L7 12Z" fill="#3cc25c" /><ellipse cx="14" cy="11.500" rx="6" ry="5" fill="#e3e3e3" /><circle cx="5" cy="5" r="1" fill="#1d5e2e" /><circle cx="10" cy="5" r="1" fill="#1d5e2e" /><circle cx="12" cy="10.500" r=".8" fill="#666" /><circle cx="16" cy="10.500" r=".8" fill="#666" /></G>
          <Gap $w={12} />
          <G w={18} h={18} stroke="#cfcbd0" strokeWidth="1.400"><path d="M1 17Q1 2 16 1M5 17Q5 6 16 5M9 17Q9 10 16 9" /><circle cx="14.500" cy="15.500" r="2" fill="#fff" stroke="none" /></G>
          <Gap $w={11} />
          <G w={21} h={16} stroke="#fff"><rect x="6.500" y="4.500" width="12" height="8" strokeWidth="1" /><rect x="8" y="6" width="9" height="5" fill="#fff" stroke="none" /><path d="M19.500 7V10.500" /><path d="M2.500 0V3M5.500 0V3M1 3.500H7V5Q6 8 4 8Q1.500 8 1 5ZM4 8V12.500H6" strokeWidth="1.100" /></G>
          <Gap $w={8} />
          <TrayText $f="500 17px/24px" $mr={14}>中</TrayText>
          <TrayText $f="16px/24px" $mr={23}>15:37</TrayText>
          <G w={21} h={20} stroke="#f4f1f4"><path d="M1 1H20V15.500H13.500L10.500 18.500L7.500 15.500H1Z" /></G>
        </Tray>
      </Taskbar>
    </Screen>
  );
}
